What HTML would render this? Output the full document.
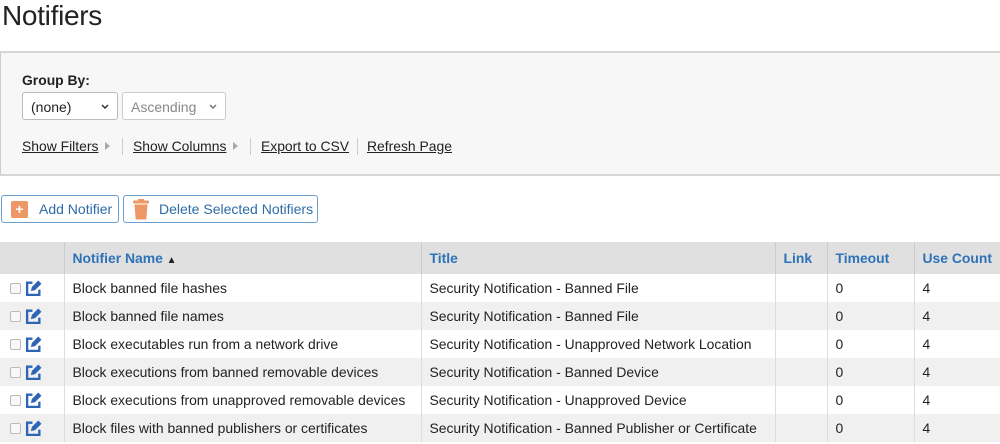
<!DOCTYPE html>
<html><head><style>
*{box-sizing:border-box;margin:0;padding:0}
body{width:1000px;height:444px;overflow:hidden;background:#fff;font-family:"Liberation Sans",sans-serif;font-size:13.9px;color:#222;position:relative}
.a{position:absolute}
h1{position:absolute;left:2px;top:0;font-weight:normal;font-size:28px;color:#222;letter-spacing:-0.3px}
.panel{left:0;top:51px;width:1002px;height:125px;background:#f7f7f7;border:1px solid #ccc;border-top:2px solid #d6d6d6;border-bottom:2px solid #d6d6d6}
.sel{height:28px;border:1px solid #bbb;border-radius:3px;background:#fff;font-size:14px;padding:6px 8px}
.sel svg{position:absolute;right:8px;top:11px}
.lnk{top:138px;font-size:13.9px;text-decoration:underline;color:#222}
.tri{top:142px;width:0;height:0;border-left:5px solid #aaa;border-top:4px solid transparent;border-bottom:4px solid transparent}
.sep{top:138px;width:1px;height:17px;background:#ccc}
.btn{top:195px;height:28px;border:1px solid #6a9fd0;border-radius:3px;background:#fff;color:#2e6ca8;font-size:14px;padding:5px 0}
table{position:absolute;left:0;top:242px;border-collapse:collapse;width:1002px}
th{background:#e0e0e0;height:32px;text-align:left;color:#2e72b8;font-size:13.9px;padding-left:8px;border-left:1px solid #ccc}
td{height:28px;padding-left:8px;font-size:13.9px;border-left:1px solid #ddd}
tr:nth-child(odd) td{background:#f0f0f0}
th:first-child,td:first-child{border-left:none;padding-left:10px}
.cb{display:inline-block;width:11px;height:11px;border:1px solid #bbb;border-radius:2px;background:#f8f8f8;vertical-align:middle}
svg.ed{vertical-align:middle;margin-left:4px}
</style></head><body>
<h1>Notifiers</h1>
<div class="a panel"></div>
<div class="a" style="left:22px;top:72px;font-weight:bold;font-size:13.9px">Group By:</div>
<div class="a sel" style="left:22px;top:92px;width:96px;color:#222">(none)<svg width="8" height="5" viewBox="0 0 8 5"><path d="M1 1l3 3 3-3" fill="none" stroke="#333" stroke-width="1.5"/></svg></div>
<div class="a sel" style="left:122px;top:92px;width:104px;color:#888;border-color:#ccc">Ascending<svg width="8" height="5" viewBox="0 0 8 5"><path d="M1 1l3 3 3-3" fill="none" stroke="#777" stroke-width="1.5"/></svg></div>
<div class="a lnk" style="left:22px">Show Filters</div><div class="a tri" style="left:105px"></div>
<div class="a sep" style="left:122px"></div>
<div class="a lnk" style="left:133px">Show Columns</div><div class="a tri" style="left:233px"></div>
<div class="a sep" style="left:250px"></div>
<div class="a lnk" style="left:261px">Export to CSV</div>
<div class="a sep" style="left:357px"></div>
<div class="a lnk" style="left:367px">Refresh Page</div>
<div class="a btn" style="left:1px;width:118px"><span style="position:absolute;left:9px;top:5px;width:17px;height:17px;background:#ee9766;border-radius:2px;color:#fff;text-align:center;line-height:16px;font-weight:bold">+</span><span style="position:absolute;left:37px;top:5px">Add Notifier</span></div>
<div class="a btn" style="left:123px;width:195px"><svg style="position:absolute;left:8px;top:3px" width="18" height="21" viewBox="0 0 18 21"><rect x="1" y="1.5" width="16" height="3" rx="1" fill="#ee9766"/><rect x="6" y="0" width="6" height="2" fill="#ee9766"/><path d="M2.5 5.5h13l-1.2 15h-10.6z" fill="#ee9766"/></svg><span style="position:absolute;left:35px;top:5px">Delete Selected Notifiers</span></div>
<table>
<tr><th style="width:64px"></th><th style="width:357px">Notifier Name <span style="color:#222;font-size:10px">&#9650;</span></th><th style="width:354px">Title</th><th style="width:52px">Link</th><th style="width:87px">Timeout</th><th>Use Count</th></tr>
<tr><td><span class="cb"></span><svg class="ed" width="17" height="17" viewBox="0 0 16 16"><path d="M7 2.5H2v11.5h11.5V9" fill="none" stroke="#2e66b5" stroke-width="2.2"/><path d="M5.5 10.5l1-4 6-6 3 3-6 6z" fill="#2e66b5"/></svg></td><td>Block banned file hashes</td><td>Security Notification - Banned File</td><td></td><td>0</td><td>4</td></tr>
<tr><td><span class="cb"></span><svg class="ed" width="17" height="17" viewBox="0 0 16 16"><path d="M7 2.5H2v11.5h11.5V9" fill="none" stroke="#2e66b5" stroke-width="2.2"/><path d="M5.5 10.5l1-4 6-6 3 3-6 6z" fill="#2e66b5"/></svg></td><td>Block banned file names</td><td>Security Notification - Banned File</td><td></td><td>0</td><td>4</td></tr>
<tr><td><span class="cb"></span><svg class="ed" width="17" height="17" viewBox="0 0 16 16"><path d="M7 2.5H2v11.5h11.5V9" fill="none" stroke="#2e66b5" stroke-width="2.2"/><path d="M5.5 10.5l1-4 6-6 3 3-6 6z" fill="#2e66b5"/></svg></td><td>Block executables run from a network drive</td><td>Security Notification - Unapproved Network Location</td><td></td><td>0</td><td>4</td></tr>
<tr><td><span class="cb"></span><svg class="ed" width="17" height="17" viewBox="0 0 16 16"><path d="M7 2.5H2v11.5h11.5V9" fill="none" stroke="#2e66b5" stroke-width="2.2"/><path d="M5.5 10.5l1-4 6-6 3 3-6 6z" fill="#2e66b5"/></svg></td><td>Block executions from banned removable devices</td><td>Security Notification - Banned Device</td><td></td><td>0</td><td>4</td></tr>
<tr><td><span class="cb"></span><svg class="ed" width="17" height="17" viewBox="0 0 16 16"><path d="M7 2.5H2v11.5h11.5V9" fill="none" stroke="#2e66b5" stroke-width="2.2"/><path d="M5.5 10.5l1-4 6-6 3 3-6 6z" fill="#2e66b5"/></svg></td><td>Block executions from unapproved removable devices</td><td>Security Notification - Unapproved Device</td><td></td><td>0</td><td>4</td></tr>
<tr><td><span class="cb"></span><svg class="ed" width="17" height="17" viewBox="0 0 16 16"><path d="M7 2.5H2v11.5h11.5V9" fill="none" stroke="#2e66b5" stroke-width="2.2"/><path d="M5.5 10.5l1-4 6-6 3 3-6 6z" fill="#2e66b5"/></svg></td><td>Block files with banned publishers or certificates</td><td>Security Notification - Banned Publisher or Certificate</td><td></td><td>0</td><td>4</td></tr>
</table>
</body></html>
